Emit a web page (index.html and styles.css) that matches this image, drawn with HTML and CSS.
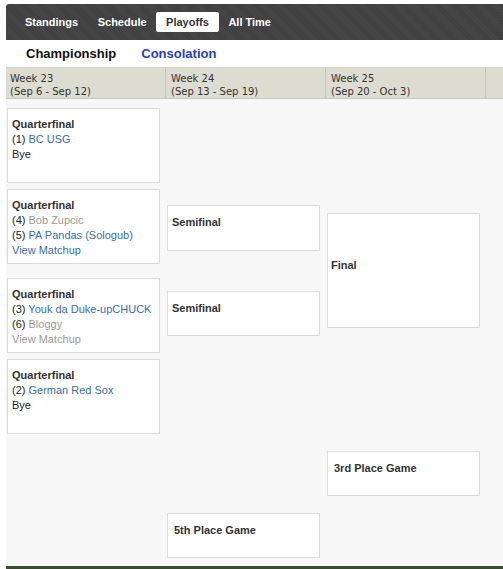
FILE: index.html
```html
<!DOCTYPE html>
<html>
<head>
<meta charset="utf-8">
<link rel="stylesheet" href="styles.css">
</head>
<body>
<div class="page">
  <nav class="topnav">
    <a class="tab">Standings</a>
    <a class="tab">Schedule</a>
    <a class="tab active">Playoffs</a>
    <a class="tab">All Time</a>
  </nav>
  <div class="subnav">
    <span class="sub current">Championship</span>
    <a class="sub link">Consolation</a>
  </div>
  <div class="weeks">
    <div class="week">Week 23<br>(Sep 6 - Sep 12)</div>
    <div class="week">Week 24<br>(Sep 13 - Sep 19)</div>
    <div class="week">Week 25<br>(Sep 20 - Oct 3)</div>
    <div class="week last"></div>
  </div>
  <div class="bracket">
    <div class="col">
      <div class="card qf qf1">
        <b>Quarterfinal</b>
        <div>(1) <a class="team">BC USG</a></div>
        <div>Bye</div>
      </div>
      <div class="card qf qf2">
        <b>Quarterfinal</b>
        <div>(4) <a class="team out">Bob Zupcic</a></div>
        <div>(5) <a class="team">PA Pandas (Sologub)</a></div>
        <a class="team">View Matchup</a>
      </div>
      <div class="card qf qf3">
        <b>Quarterfinal</b>
        <div>(3) <a class="team">Youk da Duke-upCHUCK</a></div>
        <div>(6) <a class="team out">Bloggy</a></div>
        <a class="team out">View Matchup</a>
      </div>
      <div class="card qf qf4">
        <b>Quarterfinal</b>
        <div>(2) <a class="team">German Red Sox</a></div>
        <div>Bye</div>
      </div>
    </div>
    <div class="col">
      <div class="card small sf1"><b>Semifinal</b></div>
      <div class="card small sf2"><b>Semifinal</b></div>
      <div class="card small place p5"><b>5th Place Game</b></div>
    </div>
    <div class="col">
      <div class="card final"><b>Final</b></div>
      <div class="card small place p3"><b>3rd Place Game</b></div>
    </div>
  </div>
  <div class="footline"></div>
</div>
</body>
</html>
```
FILE: styles.css
```css
html, body {
  margin: 0;
  padding: 0;
  background: #fff;
}
.page {
  padding: 4px 0 0 6px;
  font-family: "Liberation Sans", Arial, sans-serif;
  font-size: 11px;
  color: #333;
}
.topnav {
  height: 36px;
  background: #444;
  background-image: repeating-linear-gradient(45deg, #3f3f3f 0 1px, #474747 1px 2px);
  border-radius: 3px 0 0 0;
  display: flex;
  align-items: center;
  padding-left: 9px;
}
.tab {
  font-weight: bold;
  color: #fff;
  padding: 4px 10px 3px;
  line-height: 13px;
  border-radius: 2px;
  margin-right: -0.5px;
}
.tab.active {
  background: #fff;
  color: #333;
}
.subnav {
  height: 27px;
  display: flex;
  align-items: center;
  gap: 25px;
  padding-left: 20px;
  font-size: 13px;
  font-weight: bold;
}
.sub.current { color: #111; }
.sub.link { color: #2440c8; }
.weeks {
  display: flex;
  height: 30px;
  background: #dcdcd0;
  border-top: 1px solid #d2d2c6;
  border-bottom: 1px solid #c6c6ba;
  font-family: "DejaVu Sans", Verdana, sans-serif;
  font-size: 10px;
  line-height: 13px;
  color: #333;
}
.week {
  width: 160px;
  box-sizing: border-box;
  padding: 4px 0 0 4px;
  border-right: 1px solid #c2c2b6;
  flex: none;
}
.week + .week { padding-left: 5px; }
.week.last { width: 17px; border-right: none; }
.bracket {
  display: flex;
  background: #f7f7f7;
  height: 467px;
}
.col {
  width: 160px;
  flex: none;
  display: flex;
  flex-direction: column;
}
.card {
  background: #fff;
  border: 1px solid #dcdcdc;
  box-sizing: border-box;
  margin-left: 1px;
  width: 153px;
  line-height: 15px;
  padding: 8px 4px 0;
}
.card b { color: #333; }
.qf { height: 75px; color: #222; }
.qf1 { margin-top: 9px; }
.qf2 { margin-top: 6px; }
.qf3 { margin-top: 14px; }
.qf4 { margin-top: 6px; }
.team { color: #3a6ea8; }
.team.out { color: #9a9a9a; }
.small { height: 46px; width: 153px; padding-top: 9px; }
.sf1 { margin-top: 106px; }
.sf2 { margin-top: 40px; height: 45px; }
.p5 { margin-top: 177px; height: 45px; }
.place { padding-left: 6px; }
.final { margin-top: 114px; height: 115px; padding-top: 44px; padding-left: 3px; }
.p3 { margin-top: 123px; height: 45px; }
.footline {
  height: 3px;
  background: #3b4a30;
}
```
